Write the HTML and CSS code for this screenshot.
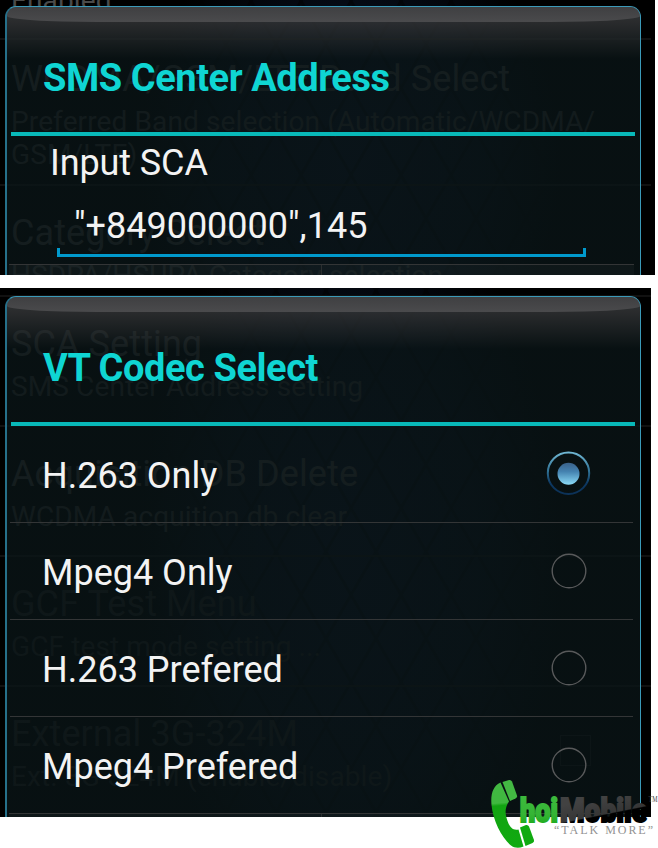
FILE: index.html
```
<!DOCTYPE html>
<html lang="en">
<head>
	<meta charset="UTF-8">
	<title>SMS Center Address / VT Codec Select</title>
	<link rel="stylesheet" href="styles.css">
</head>
<body>

	<!-- SMS center -->
	<div class="shot shot-sms">
		<div class="behind">
			<svg class="mesh" width="651" height="275">
				<defs>
					<pattern id="mesh" width="50" height="87" x="1" y="1" patternUnits="userSpaceOnUse">
						<path d="M0 0L50 87M50 0L0 87" stroke="#000" stroke-opacity=".45" stroke-width="3" fill="none"/>
					</pattern>
					<radialGradient id="glow"><stop offset="0" stop-color="#080e20"/><stop offset=".6" stop-color="#050a14"/><stop offset="1" stop-color="#000"/></radialGradient>
				</defs>
				<ellipse cx="350" cy="160" rx="210" ry="260" fill="url(#glow)"/>
				<rect width="651" height="275" fill="url(#mesh)"/>
			</svg>
			<div class="pref pref-cut"><p class="sub">Enabled</p></div>
			<div class="pref pref-tall">
				<p class="name">WCDMA/GSM/LTE Band Select</p>
				<p class="sub">Preferred Band selection (Automatic/WCDMA/<br>GSM/LTE)</p>
			</div>
			<div class="pref">
				<p class="name">Category Select</p>
				<p class="sub">HSDPA/HSUPA Category selection</p>
			</div>
		</div>

		<div class="dialog">
			<h2 class="dialog-title">SMS Center Address</h2>
			<div class="dialog-body">
				<div class="sca-label">Input SCA</div>
				<div class="sca-field">"+849000000",145</div>
			</div>
			<div class="dialog-buttons"></div>
		</div>
	</div>
	<!-- //SMS center -->

	<!-- VT codec -->
	<div class="shot shot-codec">
		<div class="behind">
			<svg class="mesh" width="651" height="529">
				<defs>
					<pattern id="mesh2" width="50" height="87" x="1" y="46" patternUnits="userSpaceOnUse">
						<path d="M0 0L50 87M50 0L0 87" stroke="#000" stroke-opacity=".45" stroke-width="3" fill="none"/>
					</pattern>
				</defs>
				<ellipse cx="350" cy="270" rx="210" ry="380" fill="url(#glow)"/>
				<rect width="651" height="529" fill="url(#mesh2)"/>
			</svg>
			<div class="pref pref-first">
				<p class="name">SCA Setting</p>
				<p class="sub">SMS Center Address setting</p>
			</div>
			<div class="pref">
				<p class="name">Acquisition DB Delete</p>
				<p class="sub">WCDMA acquition db clear</p>
			</div>
			<div class="pref off">
				<p class="name">GCF Test Menu</p>
				<p class="sub">GCF test mode setting ...</p>
			</div>
			<div class="pref off">
				<span class="check"></span>
				<p class="name">External 3G-324M</p>
				<p class="sub">Ext. 3G-324M (enable/disable)</p>
			</div>
		</div>

		<div class="dialog">
			<h2 class="dialog-title">VT Codec Select</h2>
			<ul class="codec-list">
				<li>
					<span>H.263 Only</span>
					<svg class="radio" width="46" height="46" viewBox="0 0 46 46">
						<defs>
							<linearGradient id="ring" x1="0" y1="0" x2="0" y2="1"><stop offset="0" stop-color="#6fb6d2"/><stop offset=".45" stop-color="#2f7195"/><stop offset=".75" stop-color="#0c3761"/><stop offset="1" stop-color="#0c3258"/></linearGradient>
							<linearGradient id="dot" x1="0" y1="0" x2="0" y2="1"><stop offset="0" stop-color="#3a6189"/><stop offset=".4" stop-color="#4482b0"/><stop offset="1" stop-color="#8cdcf8"/></linearGradient>
						</defs>
						<circle cx="22.5" cy="22.2" r="20.7" fill="none" stroke="url(#ring)" stroke-width="2"/>
						<circle cx="22.5" cy="22.8" r="11" fill="url(#dot)"/>
					</svg>
				</li>
				<li>
					<span>Mpeg4 Only</span>
					<svg class="radio" width="46" height="46" viewBox="0 0 46 46"><circle cx="23" cy="23" r="16.8" fill="none" stroke="#58595a" stroke-width="1.4"/></svg>
				</li>
				<li>
					<span>H.263 Prefered</span>
					<svg class="radio" width="46" height="46" viewBox="0 0 46 46"><circle cx="23" cy="23" r="16.8" fill="none" stroke="#58595a" stroke-width="1.4"/></svg>
				</li>
				<li>
					<span>Mpeg4 Prefered</span>
					<svg class="radio" width="46" height="46" viewBox="0 0 46 46"><circle cx="23" cy="23" r="16.8" fill="none" stroke="#58595a" stroke-width="1.4"/></svg>
				</li>
			</ul>
			<div class="dialog-buttons"></div>
		</div>
	</div>
	<!-- //VT codec -->

	<!-- watermark -->
	<svg class="logo" width="178" height="78" viewBox="0 0 178 78">
		<defs>
			<linearGradient id="phone" gradientUnits="userSpaceOnUse" x1="0" y1="10" x2="6" y2="78"><stop offset="0" stop-color="#43b843"/><stop offset=".36" stop-color="#3fb83f"/><stop offset=".4" stop-color="#12a312"/><stop offset="1" stop-color="#10aa10"/></linearGradient>
			<linearGradient id="green" x1="0" y1="0" x2="0" y2="1"><stop offset="0" stop-color="#3fbb3f"/><stop offset=".6" stop-color="#35b535"/><stop offset="1" stop-color="#10a510"/></linearGradient>
			<linearGradient id="word" gradientUnits="userSpaceOnUse" x1="120" y1="28" x2="126" y2="58"><stop offset="0" stop-color="#424242"/><stop offset=".54" stop-color="#363636"/><stop offset=".58" stop-color="#000"/><stop offset="1" stop-color="#000"/></linearGradient>
		</defs>
		<path d="M20.5 12.5C13 16 10.5 24 11.5 35C13 51 22 68 31 75.500C34 78 39 78.500 43.500 76.500L38.500 59.500C33 60.500 30 58 27.500 51C25 44 24.500 38 29 31.500Z" fill="url(#phone)"/>
		<path d="M22.500 12L29 10Q31 9.500 32 11.500L37 25.500Q37.500 27.500 35.500 28.500L30 31Z" fill="#43b843"/>
		<path d="M40 57.500L46 55Q48 54.500 49 56.500L54 70Q54.500 72 52.500 73L45.500 76Z" fill="#10aa10"/>
		<text class="logo-word" x="40" y="52" textLength="38" lengthAdjust="spacingAndGlyphs" fill="url(#green)" stroke="url(#green)">hoi</text>
		<text class="logo-word" x="80" y="52" textLength="87" lengthAdjust="spacingAndGlyphs" fill="url(#word)" stroke="url(#word)">Mobile</text>
		<text class="logo-tm" x="168.500" y="32" textLength="9" lengthAdjust="spacingAndGlyphs">TM</text>
		<text class="logo-tag" x="74" y="64" textLength="99">“TALK MORE”</text>
	</svg>
	<!-- //watermark -->

</body>
</html>
```
FILE: styles.css
```
body{
	position: relative;
	width: 658px;
	height: 848px;
	overflow: hidden;
	background: #fff;
	font-family: Roboto, "Liberation Sans", sans-serif;
	color: #f3f3f3;
}
body, h2, p, ul, li{ margin: 0; padding: 0; }
ul{ list-style: none; }

.shot{
	position: relative;
	box-sizing: border-box;
	overflow: hidden;
	background: #000;
}
.shot-sms{ width: 655px; height: 275px; padding: 6px 0 0 5px; }
.shot-codec{ width: 651px; height: 529px; margin-top: 13px; padding: 8px 0 0 5px; }

/* settings list under the dialog */
.behind{
	position: absolute;
	left: 0;
	top: 0;
	width: 651px;
	height: 100%;
	color: #3a3a3a;
	white-space: nowrap;
}
.mesh{ position: absolute; left: 0; top: 0; }
.pref{
	position: relative;
	box-sizing: border-box;
	height: 130px;
	padding: 26px 0 0 11px;
	border-top: 2px solid #111;
}
.pref-tall{ height: 146px; padding-top: 18px; }
.pref-first{ margin-top: 7px; }
.pref .name{ font-size: 36px; line-height: 42px; letter-spacing: 0.1px; }
.pref .sub{ margin-top: 5px; font-size: 28px; line-height: 33px; letter-spacing: 0.12px; color: #303030; }
.pref-cut{
	display: flex;
	align-items: flex-start;
	height: 38px;
	padding-top: 0;
	border: 0;
}
.pref-cut .sub{ margin-top: -16px; color: #4a4a4a; }
.off .name,
.off .sub{ color: #1f1f1f; }
.check{
	position: absolute;
	left: 560px;
	top: 48px;
	width: 29px;
	height: 29px;
	border: 1px solid #161616;
}

/* dialog */
.dialog{
	position: relative;
	box-sizing: border-box;
	width: 636px;
	height: 560px;
	border: 1px solid #3b9ab9;
	border-left: 2px solid #26708a;
	border-radius: 11px 11px 0 0;
	background: linear-gradient(rgba(60,62,64,.85) 0, rgba(48,50,52,.85) 16px, rgba(10,21,23,.78) 52px, rgba(10,21,23,.78) 100%);
}
.dialog:before{
	content: '';
	position: absolute;
	left: 0;
	top: 0;
	width: 100%;
	height: 15px;
	border-radius: 9px 9px 90px 90px / 9px 9px 6px 6px;
	background: linear-gradient(rgba(66,66,68,.8), rgba(80,80,82,.85));
}
.dialog-title{
	box-sizing: border-box;
	height: 129px;
	margin: 0 5px 0 4px;
	padding: 6px 0 0 32px;
	border-bottom: 4px solid #08b9b9;
	font-size: 38px;
	font-weight: bold;
	line-height: 131px;
	letter-spacing: -0.43px;
	color: #0fd5d3;
	white-space: nowrap;
}

.dialog-body{ height: 128px; padding: 6px 54px 0 50px; box-sizing: border-box; }
.sca-label{
	margin-left: -7px;
	font-size: 36px;
	line-height: 42px;
	letter-spacing: -0.1px;
}
.sca-field{
	position: relative;
	margin-top: 21px;
	padding-left: 17px;
	height: 52px;
	box-sizing: border-box;
	border-bottom: 3px solid #0099cc;
	font-size: 36px;
	line-height: 42px;
}
.sca-field:before,
.sca-field:after{
	content: '';
	position: absolute;
	bottom: 0;
	width: 3px;
	height: 6px;
	background: #0099cc;
}
.sca-field:before{ left: 0; }
.sca-field:after{ right: 0; }

.codec-list li{
	display: flex;
	align-items: center;
	justify-content: space-between;
	box-sizing: border-box;
	height: 97px;
	margin: 0 7px 0 3px;
	padding: 0 41px 0 32px;
	border-bottom: 1px solid #333536;
	font-size: 36px;
}
.codec-list li:last-child{ border-bottom: 0; height: 96px; }
.codec-list span{ padding-top: 4px; }
.radio{ display: block; }

.dialog-buttons{
	height: 80px;
	margin: 0 6px 0 2px;
	border-top: 1px solid #333536;
	background: linear-gradient(90deg, transparent 312px, #2a2e2f 312px, #2a2e2f 313px, transparent 313px), rgba(255,255,255,.03);
}

/* watermark */
.logo{ position: absolute; left: 480px; top: 770px; }
.logo-word{
	font-family: Roboto, "Liberation Sans", sans-serif;
	font-size: 33px;
	font-weight: 900;
	stroke-width: 2px;
}
.logo-tm{ font-family: "Liberation Serif", serif; font-size: 8px; fill: #444; }
.logo-tag{ font-family: "Liberation Serif", serif; font-size: 12px; fill: #929292; }
```
